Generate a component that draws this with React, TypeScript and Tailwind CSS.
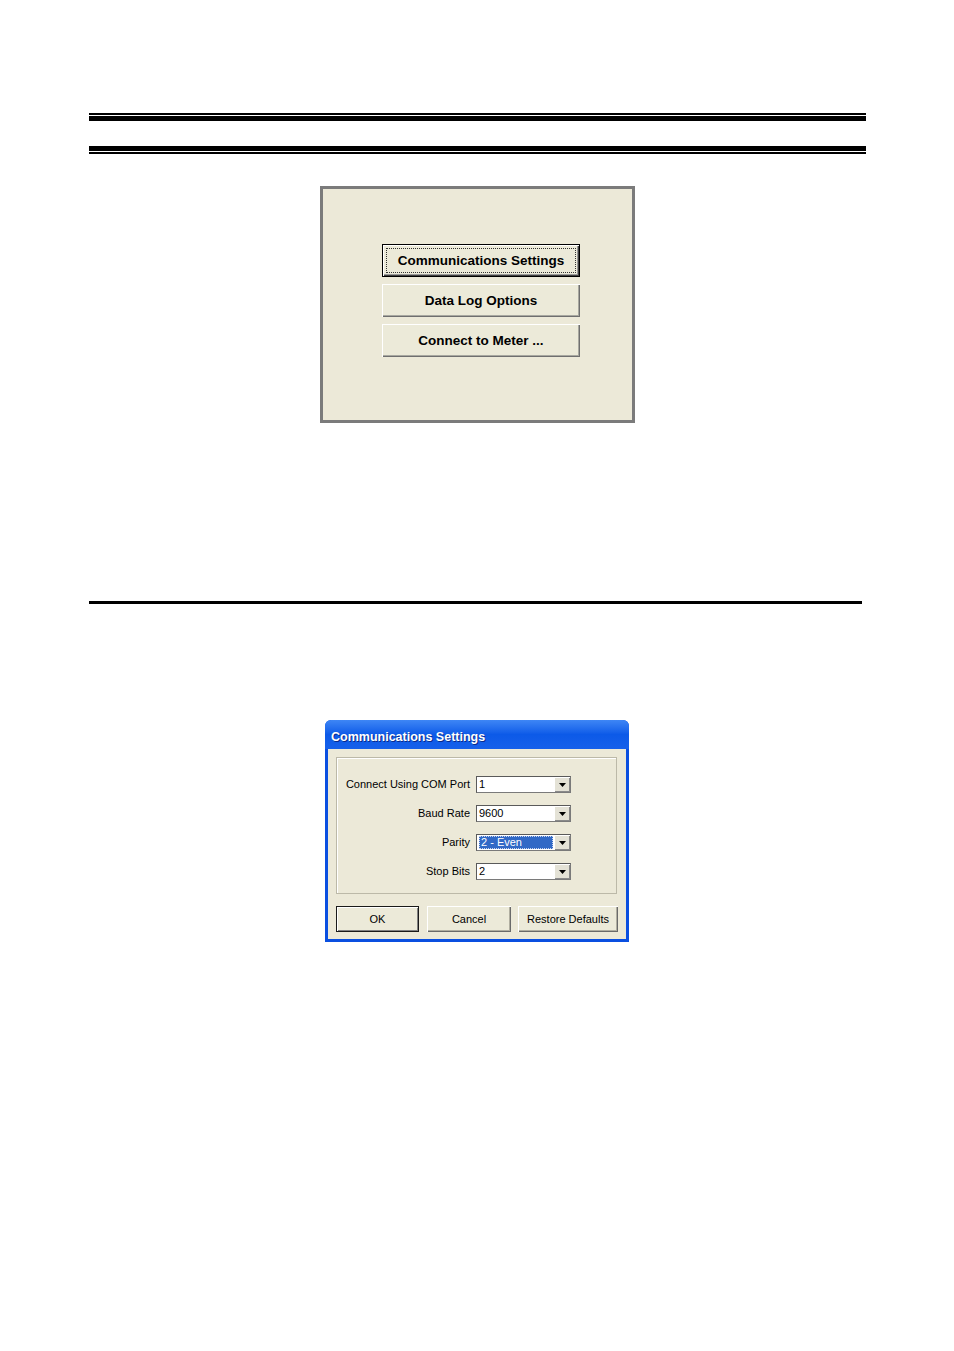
import React from "react";

const sans = { fontFamily: '"Liberation Sans", Arial, sans-serif' };

function PanelButton({ label, focused }: { label: string; focused?: boolean }) {
  if (focused) {
    return (
      <div className="h-[33px] w-[198px] border border-black bg-[#ecead9] shadow-[inset_1px_1px_#ffffff,inset_-1px_-1px_#404040,inset_-2px_-2px_#9a9a9a] p-[3px]">
        <div className="flex h-full w-full items-center justify-center border border-dotted border-[#333] pt-[2px]">
          <span className="text-[13.5px] font-bold text-black" style={sans}>
            {label}
          </span>
        </div>
      </div>
    );
  }
  return (
    <div className="flex h-[33px] w-[198px] items-center justify-center bg-[#ecead9] pt-[2px] shadow-[inset_1px_1px_#ffffff,inset_-1px_-1px_#6f6f6f,inset_-2px_-2px_#a8a8a0]">
      <span className="text-[13.5px] font-bold text-black" style={sans}>
        {label}
      </span>
    </div>
  );
}

function Combo({ value, selected }: { value: string; selected?: boolean }) {
  return (
    <div className="flex h-[17px] w-[95px] items-stretch border border-[#7a7a7a] border-t-[#5a5a5a] border-l-[#5a5a5a] bg-white">
      <div className="flex flex-1 items-center pl-[2px] pr-[1px]">
        {selected ? (
          <div className="flex h-[13px] w-full items-center border border-dotted border-[#c8d4ee] bg-[#3169c6] pl-[1px] text-[11px] leading-none text-white" style={sans}>
            {value}
          </div>
        ) : (
          <span className="text-[11px] leading-none text-black" style={sans}>
            {value}
          </span>
        )}
      </div>
      <div className="flex w-[16px] items-center justify-center bg-[#e4e2d6] shadow-[inset_1px_1px_#ffffff,inset_-1px_-1px_#8a8a8a]">
        <svg width="7" height="4" viewBox="0 0 7 4">
          <polygon points="0,0 7,0 3.5,4" fill="#000" />
        </svg>
      </div>
    </div>
  );
}

function DlgButton({ label, w, def }: { label: string; w: string; def?: boolean }) {
  return (
    <div
      className={
        "flex h-[26px] items-center justify-center bg-[#ecead9] text-[11px] text-black " +
        w +
        (def
          ? " border border-[#1a1a1a] shadow-[inset_1px_1px_#ffffff,inset_-1px_-1px_#808080]"
          : " shadow-[inset_1px_1px_#ffffff,inset_-1px_-1px_#6a6a6a,inset_-2px_-2px_#b0aea0]")
      }
      style={sans}
    >
      {label}
    </div>
  );
}

function Row({ label, value, selected }: { label: string; value: string; selected?: boolean }) {
  return (
    <div className="flex h-[17px] items-center">
      <div className="w-[133px] text-right text-[11px] leading-none text-black" style={sans}>
        {label}
      </div>
      <div className="ml-[6px]">
        <Combo value={value} selected={selected} />
      </div>
    </div>
  );
}

export default function App() {
  return (
    <div className="relative h-[1351px] w-[954px] overflow-hidden bg-white">
      <div className="pt-[113px]">
        <div className="ml-[89px] w-[777px]">
          <div className="h-[2px] bg-black" />
          <div className="mt-[1px] h-[5px] bg-black" />
          <div className="mt-[25px] h-[5px] bg-black" />
          <div className="mt-[1px] h-[2px] bg-black" />
        </div>

        {/* Top panel */}
        <div className="ml-[320px] mt-[32px] h-[237px] w-[315px] border-[3px] border-[#7b7b7b] bg-[#ece9d8]">
          <div className="ml-[59px] mt-[55px] flex flex-col gap-[7px]">
            <PanelButton label="Communications Settings" focused />
            <PanelButton label="Data Log Options" />
            <PanelButton label="Connect to Meter ..." />
          </div>
        </div>

        <div className="ml-[89px] mt-[178px] h-[3px] w-[773px] bg-black" />

        {/* Dialog */}
        <div className="ml-[325px] mt-[116px] w-[304px] overflow-hidden rounded-t-[6px] bg-[#0a4fe0]">
          <div className="flex h-[29px] items-center bg-gradient-to-b from-[#3e86f5] via-[#0c5ae8] to-[#1660ea] pl-[6px] pt-[5px]">
            <span className="text-[12.5px] font-bold text-white [text-shadow:1px_1px_#0a2a8a]" style={sans}>
              Communications Settings
            </span>
          </div>
          <div className="mx-[3px] mb-[3px] bg-[#ece9d8] px-[8px] pb-[7px] pt-[8px]">
            <div className="h-[137px] w-[281px] border border-[#bcb9a8] pt-[18px] shadow-[inset_1px_1px_#ffffff]">
              <div className="flex flex-col gap-[12px]">
                <Row label="Connect Using COM Port" value="1" />
                <Row label="Baud Rate" value="9600" />
                <Row label="Parity" value="2 - Even" selected />
                <Row label="Stop Bits" value="2" />
              </div>
            </div>
            <div className="mt-[12px] flex">
              <DlgButton label="OK" w="w-[83px]" def />
              <div className="ml-[8px]">
                <DlgButton label="Cancel" w="w-[84px]" />
              </div>
              <div className="ml-[7px]">
                <DlgButton label="Restore Defaults" w="w-[100px]" />
              </div>
            </div>
          </div>
        </div>
      </div>
    </div>
  );
}
